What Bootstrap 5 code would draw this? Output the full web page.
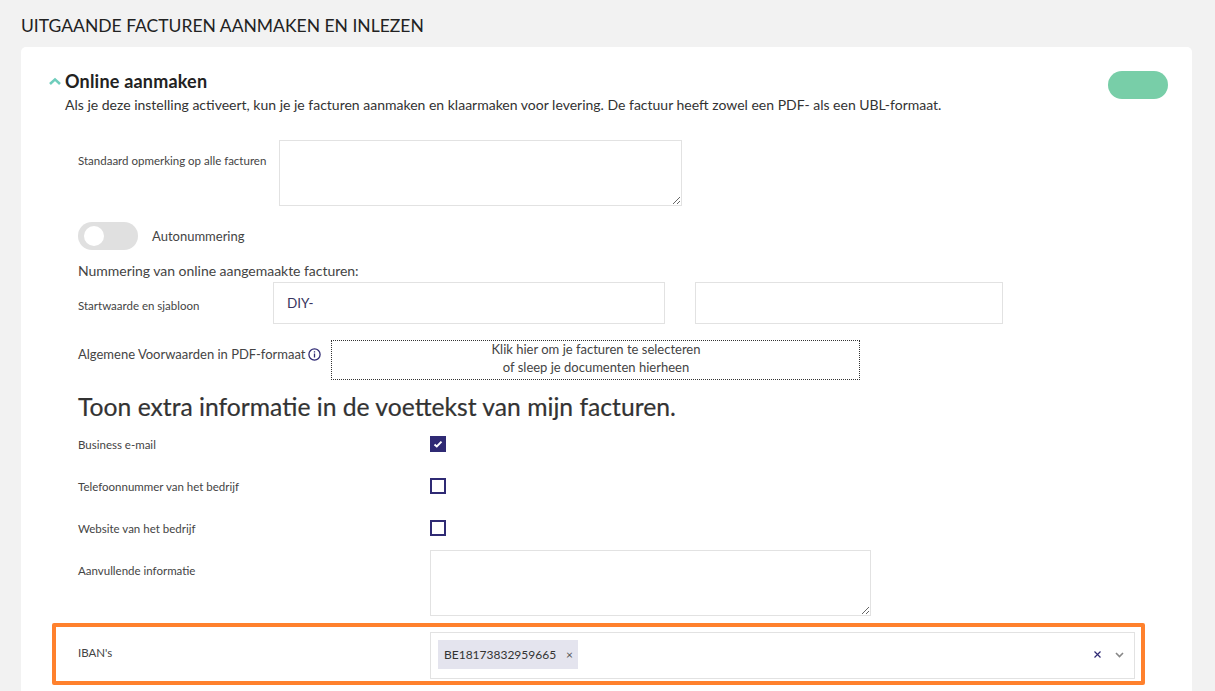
<!doctype html>
<html lang="nl">
<head>
<meta charset="utf-8">
<title>Facturen</title>
<link href="https://cdn.jsdelivr.net/npm/bootstrap@5.3.0/dist/css/bootstrap.min.css" rel="stylesheet">
<style>
html,body{height:691px;overflow:hidden}
body{background:#f2f2f2;font-family:Lato,"Liberation Sans",sans-serif;color:#333;font-size:14px}
.page-title{font-size:17.5px;line-height:22px;font-weight:400;color:#222;margin:0;padding:15px 0 10px 21px}
.panel{margin-left:21px;width:1171px;background:#fff;border-radius:5px 5px 0 0;padding:22px 24px 0 28px;height:644px}
.head-row{height:24px}
.chev{width:16px;height:10px;flex:none;margin-top:8px}
.sec-title{font-size:18px;font-weight:700;color:#222;margin:0;line-height:24px;letter-spacing:.2px}
.pill-on{width:60px;height:28px;border-radius:14px;background:#78cea8;margin-top:2px}
.sec-desc{font-size:14px;line-height:20px;margin:2px 0 0 16px;color:#333}
.form-area{padding-left:29px}
.lbl{font-size:11.5px;line-height:16px;color:#444}
.lbl-a{width:201px;flex:none;padding-top:13px}
.lbl-b{width:195px;flex:none;padding-top:16px}
.lbl-c{font-size:13px;line-height:18px;color:#444;padding-top:5px;white-space:nowrap}
.auto-lbl{font-size:13px;line-height:18px;color:#444;margin-left:14px}
.box{display:block;border:1px solid #e2e2e2;background:#fff;border-radius:0;outline:0}
.ta1{width:403px;height:66px;resize:both}
.r1{margin-top:25px}
.r2{margin-top:16px;height:28px}
.tog{width:60px;height:28px;border-radius:14px;background:#e0e0e0;position:relative;flex:none}
.tog::after{content:"";position:absolute;left:6px;top:4px;width:20px;height:20px;border-radius:50%;background:#fff}
.num-head{font-size:14px;line-height:18px;margin-top:12px;height:19px;color:#444;letter-spacing:-.03px}
.r3{height:42px;margin-top:1px}
.inp1{width:392px;height:42px;padding:0 13px;font-size:13.5px;color:#383560}
.inp2{width:308px;height:42px;margin-left:30px}
.r4{margin-top:16px;height:40px}
.info{width:13px;height:13px;margin:8px 0 0 3px;flex:none}
.drop{width:529px;height:40px;margin-left:10px;border:1px dotted #333;text-align:center;font-size:13px;line-height:17.5px;color:#444}
.sub-title{font-size:24.7px;line-height:30px;font-weight:400;color:#333;margin:12px 0 0;-webkit-text-stroke:.2px #333}
.chk-list{margin-top:1px}
.chk-row{height:42px}
.chk-col{width:352px;flex:none}
.chk-lbl{padding-top:2px}
.extra-row{margin-top:1px}
.extra-lbl{padding-top:13px}
.chk{width:16px;height:16px;border:2px solid #2f2a74;flex:none;display:flex;align-items:center;justify-content:center;background:#fff}
.chk.on{background:#2f2a74}
.ta2{width:441px;height:66px;resize:both}
.iban-wrap{border:4px solid #ff812d;border-radius:2px;width:1093px;height:62px;margin:7px 0 0 -26px;padding:5px 6px 0 22px}
.iban-lbl{padding-top:13px}
.sel{width:705px;height:47px;padding:7px 10px 7px 7px}
.tag{background:#e4e4ee;height:29px;width:140px;padding:0 5px 0 6px;font-size:12px;line-height:29px;color:#333}
.tag-x{font-size:12px;color:#555}
.sel-icons{margin-top:10px;gap:13px}
</style>
</head>
<body>
<h1 class="page-title">UITGAANDE FACTUREN AANMAKEN EN INLEZEN</h1>
<div class="panel">
  <div class="d-flex align-items-start head-row">
    <svg class="chev" viewBox="0 0 16 10" aria-hidden="true"><path d="M1 7 L6 2.4 L11 7" fill="none" stroke="#6fcdbc" stroke-width="2.6"/></svg>
    <h2 class="sec-title">Online aanmaken</h2>
    <div class="pill-on ms-auto"></div>
  </div>
  <p class="sec-desc">Als je deze instelling activeert, kun je je facturen aanmaken en klaarmaken voor levering. De factuur heeft zowel een PDF- als een UBL-formaat.</p>
  <div class="form-area">
    <div class="d-flex r1">
      <label class="lbl lbl-a">Standaard opmerking op alle facturen</label>
      <textarea class="box ta1"></textarea>
    </div>
    <div class="d-flex align-items-center r2">
      <div class="tog"></div>
      <span class="auto-lbl">Autonummering</span>
    </div>
    <div class="num-head">Nummering van online aangemaakte facturen:</div>
    <div class="d-flex r3">
      <label class="lbl lbl-b">Startwaarde en sjabloon</label>
      <input class="box inp1" value="DIY-">
      <input class="box inp2">
    </div>
    <div class="d-flex r4">
      <div class="d-flex align-items-start"><span class="lbl-c">Algemene Voorwaarden in PDF-formaat</span>
        <svg class="info" viewBox="0 0 13 13" aria-hidden="true"><circle cx="6.5" cy="6.5" r="5.6" fill="none" stroke="#2f2a74" stroke-width="1.3"/><path d="M6.5 5.6v3.8M6.5 3.2v1.3" stroke="#2f2a74" stroke-width="1.3"/></svg>
      </div>
      <div class="drop">Klik hier om je facturen te selecteren<br>of sleep je documenten hierheen</div>
    </div>
    <h3 class="sub-title">Toon extra informatie in de voettekst van mijn facturen.</h3>
    <div class="chk-list">
      <div class="d-flex align-items-center chk-row"><div class="chk-col lbl chk-lbl">Business e-mail</div>
        <div class="chk on"><svg width="10" height="8" viewBox="0 0 10 8" aria-hidden="true"><path d="M1.5 4.4 L3.8 6.4 L8.5 1.6" fill="none" stroke="#fff" stroke-width="2"/></svg></div></div>
      <div class="d-flex align-items-center chk-row"><div class="chk-col lbl chk-lbl">Telefoonnummer van het bedrijf</div><div class="chk"></div></div>
      <div class="d-flex align-items-center chk-row"><div class="chk-col lbl chk-lbl">Website van het bedrijf</div><div class="chk"></div></div>
      <div class="d-flex extra-row"><div class="chk-col lbl extra-lbl">Aanvullende informatie</div><textarea class="box ta2"></textarea></div>
    </div>
    <div class="iban-wrap d-flex">
      <div class="chk-col lbl iban-lbl">IBAN's</div>
      <div class="box sel d-flex align-items-start">
        <div class="tag d-flex justify-content-between"><span>BE18173832959665</span><span class="tag-x">×</span></div>
        <div class="ms-auto d-flex align-items-center sel-icons">
          <svg width="9" height="9" viewBox="0 0 9 9" aria-hidden="true"><path d="M1.5 1.5 L7.5 7.5 M7.5 1.5 L1.5 7.5" stroke="#2f2a74" stroke-width="1.2"/></svg>
          <svg width="9" height="6" viewBox="0 0 9 6" aria-hidden="true"><path d="M1 1 L4.5 4.5 L8 1" fill="none" stroke="#888" stroke-width="1.6"/></svg>
        </div>
      </div>
    </div>
  </div>
</div>
<script src="https://cdn.jsdelivr.net/npm/bootstrap@5.3.0/dist/js/bootstrap.bundle.min.js"></script>
</body>
</html>
